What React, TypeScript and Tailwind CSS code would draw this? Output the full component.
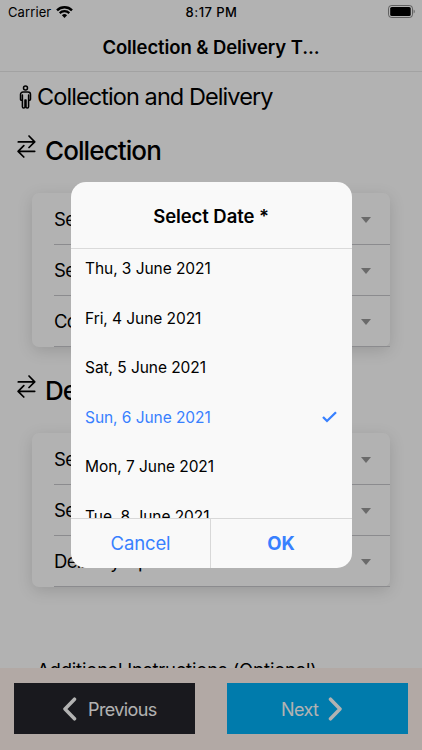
import clsx from "clsx";

const DATES = [
  "Thu, 3 June 2021",
  "Fri, 4 June 2021",
  "Sat, 5 June 2021",
  "Sun, 6 June 2021",
  "Mon, 7 June 2021",
  "Tue, 8 June 2021",
];

const SELECTED = "Sun, 6 June 2021";

type SectionProps = {
  title: string;
  fields: string[];
};

function StatusBar() {
  return (
    <div className="flex h-6 shrink-0 items-center justify-between pl-2 pr-[7px] text-[13px]">
      <div className="flex w-[120px] items-center gap-[5px]">
        <span className="pt-px tracking-[0.1px]">Carrier</span>
        <svg width="17" height="12" viewBox="0 0 17 12" fill="none" stroke="black">
          <path d="M1 4.4a10.6 10.6 0 0 1 15 0" strokeWidth="2.4" />
          <path d="M3.7 7.1a6.8 6.8 0 0 1 9.6 0" strokeWidth="2.2" />
          <path d="M8.5 12 5.9 9.3a3.7 3.7 0 0 1 5.2 0Z" fill="black" stroke="none" />
        </svg>
      </div>
      <span className="pt-px font-medium tracking-[0.45px]">8:17 PM</span>
      <div className="-mt-px flex w-[120px] justify-end">
        <svg width="27" height="13" viewBox="0 0 27 13" fill="none">
          <rect x="0.5" y="0.5" width="24" height="12" rx="3" stroke="black" strokeOpacity="0.45" />
          <rect x="2.2" y="2" width="20.5" height="9" rx="1.6" fill="black" />
          <path d="M25.7 4.5v4c1.3-.5 1.3-3.5 0-4Z" fill="black" fillOpacity="0.5" />
        </svg>
      </div>
    </div>
  );
}

function ManIcon() {
  return (
    <svg width="13" height="24" viewBox="0 0 13 24" fill="none" stroke="black" strokeWidth="1.5" strokeLinejoin="round" strokeLinecap="round">
      <circle cx="6.5" cy="3" r="2" />
      <path d="M4 7h5a2.5 2.5 0 0 1 2.5 2.5v4.7a.9.9 0 0 1-1.9 0V10v11.8a1.1 1.1 0 0 1-2.6 0V15H6v6.8a1.1 1.1 0 0 1-2.6 0V10v4.2a.9.9 0 0 1-1.9 0V9.500A2.500 2.500 0 0 1 4 7Z" />
    </svg>
  );
}

function SwapIcon() {
  return (
    <svg className="shrink-0" width="19" height="23" viewBox="0 0 19 23" fill="none" stroke="black" strokeWidth="1.7" strokeLinecap="round" strokeLinejoin="round">
      <path d="M1.300 6.900h16.200M12 1l5.700 5.900L12 12.500" />
      <path d="M17.700 16.300H1.200M6.800 10.700 1.100 16.300l5.700 5.700" />
    </svg>
  );
}

function Section({ title, fields }: SectionProps) {
  return (
    <section className="h-[240px]">
      <div className="flex h-[71px] items-start gap-2 pl-[17px]">
        <div className="pt-[13px]">
          <SwapIcon />
        </div>
        <h2 className="pt-[11px] pl-[1px] text-[26px] leading-[36px] font-medium tracking-[-0.9px]">{title}</h2>
      </div>
      <div className="ml-8 w-[358px] rounded-[7px] bg-white pt-px pl-[22px] shadow-[0_4px_16px_rgba(0,0,0,0.14)]">
        {fields.map((field) => (
          <div key={field} className="flex h-[51px] items-center justify-between border-b border-[#c8c7cc] pr-[19px] text-[18.5px] tracking-[-0.7px]">
            <span className="pt-px">{field}</span>
            <span className="mt-px size-0 border-x-[5.5px] border-t-[6px] border-x-transparent border-t-[#999999]" />
          </div>
        ))}
      </div>
    </section>
  );
}

function Footer() {
  return (
    <footer className="flex h-[82px] shrink-0 justify-between bg-[#fff3ec] px-[14px] pt-[15px]">
      <button className="flex h-[51px] w-[181px] items-center bg-[#24252b] pl-[48px] pt-px text-[18px] tracking-[-0.6px] text-white">
        <svg width="15" height="24" viewBox="0 0 15 24" fill="none" stroke="white" strokeWidth="3.5" strokeLinecap="round" strokeLinejoin="round">
          <path d="M12.5 2.2 3 12l9.5 9.8" />
        </svg>
        <span className="ml-[11px]">Previous</span>
      </button>
      <button className="flex h-[51px] w-[181px] items-center bg-[#00b0f6] pl-[54px] pt-px text-[18px] tracking-[-0.6px] text-white">
        <span>Next</span>
        <svg className="ml-[10px]" width="15" height="24" viewBox="0 0 15 24" fill="none" stroke="white" strokeWidth="3.5" strokeLinecap="round" strokeLinejoin="round">
          <path d="m2.5 2.2 9.5 9.8-9.5 9.8" />
        </svg>
      </button>
    </footer>
  );
}

function DateDialog() {
  return (
    <div className="flex h-[386px] w-[281px] flex-col overflow-hidden rounded-[15px] bg-[#f9f9f9]">
      <h3 className="flex h-[67px] shrink-0 items-center justify-center border-b border-[#dadada] pt-[3px] text-[18.5px] font-semibold tracking-[-0.08px]">
        Select Date *
      </h3>
      <div className="min-h-0 flex-1 overflow-hidden">
        <ul className="-mt-[5px]">
          {DATES.map((date) => (
            <li
              key={date}
              className={clsx(
                "flex h-[49.5px] items-center justify-between pr-[15px] pl-[14.5px] text-[15.5px] tracking-[-0.06px]",
                date === SELECTED && "text-[#3880ff]"
              )}
            >
              <span>{date}</span>
              {date === SELECTED && (
                <svg width="15" height="12" viewBox="0 0 15 12" fill="none" stroke="#3880ff" strokeWidth="2.3">
                  <path d="m1 6 4 4L14 1.2" />
                </svg>
              )}
            </li>
          ))}
        </ul>
      </div>
      <div className="flex h-[50px] shrink-0 border-t border-[#d8d8d8] text-[18.5px] text-[#3880ff]">
        <button className="w-[140px] border-r border-[#d8d8d8] pt-px pl-px tracking-[-0.15px]">Cancel</button>
        <button className="flex-1 font-bold">OK</button>
      </div>
    </div>
  );
}

export default function App() {
  return (
    <div className="relative flex h-[750px] w-[422px] flex-col overflow-hidden bg-white font-['Inter',sans-serif] text-black">
      <StatusBar />
      <h1 className="flex h-12 shrink-0 items-center justify-center border-b border-[#e8e8e8] text-[18.5px] font-semibold tracking-[-0.1px]">
        Collection &amp; Delivery T...
      </h1>

      <main className="min-h-0 flex-1 overflow-hidden">
        <div className="flex h-[50px] items-center gap-[5px] pl-[19px]">
          <ManIcon />
          <span className="text-[23.5px] tracking-[-0.92px]">Collection and Delivery</span>
        </div>
        <Section title="Collection" fields={["Select Date *", "Select Time *", "Collection Option"]} />
        <Section title="Delivery" fields={["Select Date *", "Select Time *", "Delivery Option"]} />
        <p className="mt-[54px] pl-[37px] text-[18.5px] leading-[28px] tracking-[-0.2px]">Additional Instructions (Optional)</p>
      </main>

      <Footer />

      {/* Backdrop with the date picker */}
      <div className="absolute inset-0 flex items-center justify-center bg-black/30">
        <DateDialog />
      </div>
    </div>
  );
}
